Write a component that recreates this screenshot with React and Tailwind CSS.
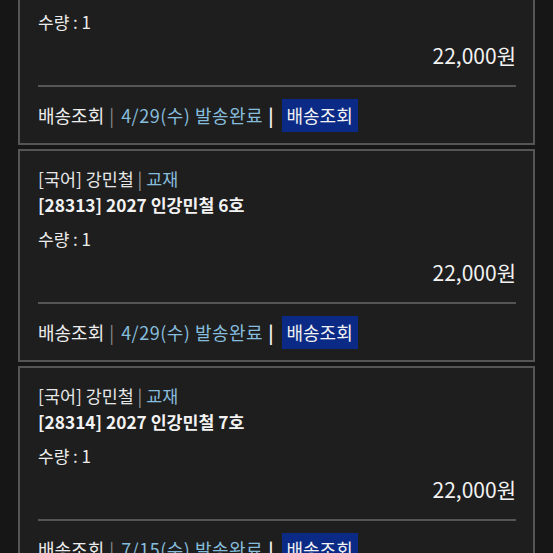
import React from "react";

const items = [
  { code: "28312", no: "5", date: "4/29(수)" },
  { code: "28313", no: "6", date: "4/29(수)" },
  { code: "28314", no: "7", date: "7/15(수)" },
];

function Card({ code, no, date }) {
  return (
    <div className="h-[213px] border-2 border-[#555555] bg-[#1e1e1e] pl-[18px] pr-[17px] pt-[15px] pb-[11px] flex flex-col">
      <div className="text-[17.4px] leading-[26px] text-[#e6e6e6] whitespace-nowrap">
        [국어] 강민철 <span className="text-[#9a9a9a]">|</span> <span className="text-[#86bcdc]">교재</span>
      </div>
      <div className="text-[17.3px] leading-[26px] font-bold text-[#f2f2f2] whitespace-nowrap">
        [{code}] 2027 인강민철 {no}호
      </div>
      <div className="mt-[8px] text-[17px] leading-[26px] text-[#ececec]">수량 : 1</div>
      <div className="mt-[6px] text-[21px] leading-[28px] text-[#f2f2f2] text-right">22,000원</div>
      <div className="mt-[16px] h-[2px] bg-[#555555]" />
      <div className="mt-[12px] flex items-center h-[33px] text-[18px] whitespace-nowrap">
        <span className="text-[#ececec]">배송조회</span>
        <span className="text-[#8a8a8a] ml-[5px] mr-[7px]">|</span>
        <span className="text-[#86bcdc] tracking-[0.5px]">{date} 발송완료</span>
        <span className="text-[#f2f2f2] font-bold ml-[5px] mr-[8px]">|</span>
        <span className="h-[33px] px-[5px] flex items-center bg-[#0a2a86] text-[#f2f2f2]">배송조회</span>
      </div>
    </div>
  );
}

export default function App() {
  return (
    <div
      className="w-[553px] h-[553px] overflow-hidden bg-[#161616]"
      style={{ fontFamily: '"Noto Sans CJK KR", "Noto Sans", sans-serif' }}
    >
      <div className="-mt-[68px] mx-[18px] flex flex-col gap-[4px]">
        {items.map((it) => (
          <Card key={it.code} {...it} />
        ))}
      </div>
    </div>
  );
}
